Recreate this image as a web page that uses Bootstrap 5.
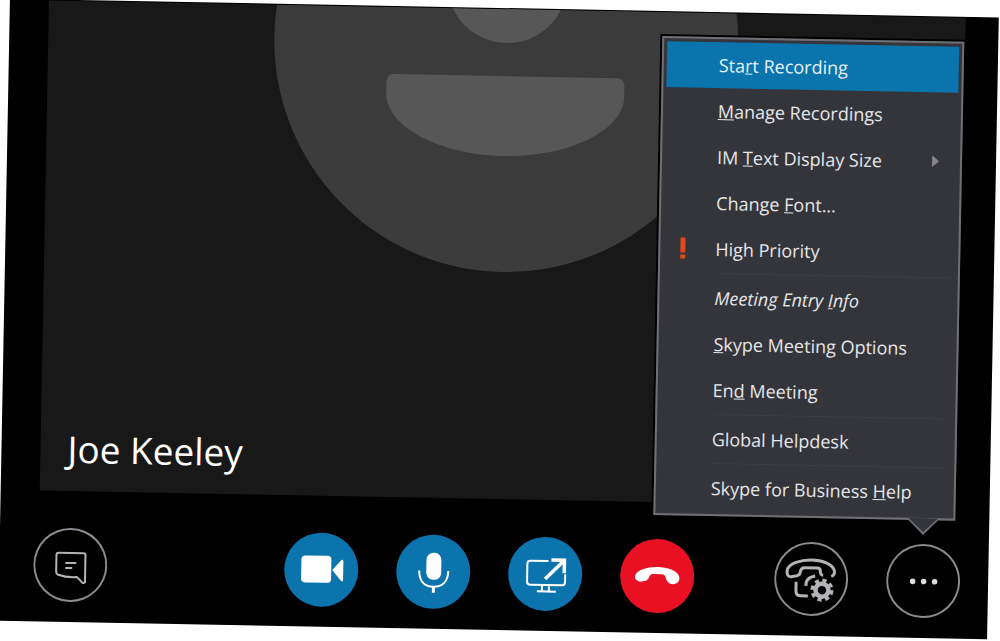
<!DOCTYPE html>
<html lang="en">
<head>
<meta charset="utf-8">
<meta name="viewport" content="width=device-width, initial-scale=1">
<title>Skype Meeting</title>
<link href="https://cdn.jsdelivr.net/npm/bootstrap@5.3.0/dist/css/bootstrap.min.css" rel="stylesheet">
<style>
  body { background: #fff; padding: 8px 7px 11px 4px; font-family: "Open Sans", "Noto Sans", sans-serif; }
  .meeting { min-height: calc(100vh - 19px); background: #000; transform: rotate(1.08deg); }
  .stage { margin: 1px 33px 0 39px; background: #181818; }
  .stage-art { height: 490px; }
  .caller { left: 27px; bottom: 18px; font-size: 37px; line-height: 48px; color: #fff; }
  .controls { padding: 37px 28px 20px 34px; }
  .call-group { margin-right: 80px; }
  .button-row { gap: 38px; }
  .round { width: 74px; height: 74px; border: 0; padding: 0; border-radius: 50%; flex: none; background: #0b74ad; color: #fff; }
  .round svg { display: block; }
  .round-line { background: #000; color: #b4b4b8; box-shadow: inset 0 0 0 2px #8b8a90; }
  .round-end { background: #e81123; }
  .more-menu { right: 34px; bottom: 118px; width: 302px; padding: 3px; background: #34353b; border: 2px solid #6f6e74; box-shadow: 0 0 0 2px #000; z-index: 5; }
  .menu-row { display: flex; align-items: center; width: 100%; height: 46px; padding: 0 18px 0 0; border: 0; background: none; color: #e6e6e8; font-size: 18px; line-height: 24px; text-align: left; }
  .menu-row.active { background: #0b74ad; color: #e4f1f8; }
  .menu-row .mark-col { width: 52px; flex: none; padding-left: 16px; color: #e2491f; }
  .menu-row .mark-col svg { display: block; }
  .menu-line { height: 1px; margin: 1px 4px 1px 54px; border: 0; background: #3c3d43; opacity: 1; }
  .menu-tip { right: 12px; top: 100%; }
</style>
</head>
<body class="min-vh-100 overflow-hidden">
<main class="meeting position-relative d-flex flex-column">
  <section class="stage position-relative flex-grow-1 overflow-hidden">
    <svg class="stage-art d-block w-100" viewBox="43 9 917 490" preserveAspectRatio="xMidYMin meet" aria-hidden="true">
      <circle cx="501" cy="40" r="232" fill="#3b3b3b"/>
      <circle cx="501" cy="-17" r="60" fill="#575757"/>
      <path d="M390 76H612Q620 76 620 84V95C620 128 566 156 501 156S382 128 382 95V84Q382 76 390 76Z" fill="#575757"/>
    </svg>
    <div class="caller position-absolute">Joe Keeley</div>
  </section>

  <footer class="controls d-flex align-items-center">
    <button type="button" class="round round-line" aria-label="Conversation">
      <svg width="74" height="74" fill="none" stroke="currentColor" stroke-width="2" stroke-linejoin="round"><path d="M25 25H50Q52 25 52 27V54Q50 56 48 53L44 49Q34 50 25 47Q23 46 23 44V27Q23 25 25 25ZM32 35H43M32 40H39"/></svg>
    </button>
    <div class="call-group button-row d-flex ms-auto">
      <button type="button" class="round" aria-label="Video">
        <svg width="74" height="74" fill="currentColor"><rect x="17" y="23" width="30" height="27" rx="4"/><path d="M48 37L57 27Q59 26 59 28V47Q59 49 57 48Z"/></svg>
      </button>
      <button type="button" class="round" aria-label="Microphone">
        <svg width="74" height="74" fill="none" stroke="currentColor" stroke-width="2"><rect x="30" y="18" width="15" height="27" rx="7" fill="currentColor" stroke="none"/><path d="M23 36C23 47 29 52 37.500 52S52 47 52 36"/><path d="M37.500 52V58" stroke-width="3"/></svg>
      </button>
      <button type="button" class="round" aria-label="Present">
        <svg width="74" height="74" fill="none" stroke="currentColor" stroke-width="2"><path d="M40 24H22Q19 24 19 27V45Q19 48 22 48H54Q57 48 57 45V37M34 48V54M41 48V54M29 54.500H48"/><path d="M37 42L55 24M43 23H56V36" stroke-width="3.500"/></svg>
      </button>
      <button type="button" class="round round-end" aria-label="Hang up">
        <svg width="74" height="74" fill="currentColor"><path d="M15 37C17 31 27 28 37 28S57 31 59 37Q60 42 56 44Q51 46 48 43Q46 41 45 37Q44 35 42 35H32Q30 35 29 38Q28 41 26 42L20 43Q14 42 15 37Z"/></svg>
      </button>
    </div>
    <div class="button-row d-flex">
      <button type="button" class="round round-line" aria-label="Call controls">
        <svg width="74" height="74" fill="none" stroke="currentColor" stroke-width="3" stroke-linejoin="round">
          <path d="M57 34Q61 33 60 28C58 22 48 18 37 18S15 22 13 28C12 34 15 36 18 35L23 34Q26 33 26 30Q27 26 30 26H43Q46 26 46 29Q46 33 49 33"/>
          <path d="M22 40V49Q22 54 27 54H34M41 34Q31 36 32 44"/>
          <circle cx="48" cy="48" r="6.500" stroke-width="4.500"/>
          <circle cx="48" cy="48" r="9.800" stroke-width="3.500" stroke-dasharray="4.200 3.497"/>
        </svg>
      </button>
      <button type="button" class="round round-line" aria-label="More options" aria-expanded="true">
        <svg width="74" height="74" fill="#dcdce0"><circle cx="26.500" cy="37.500" r="2.800"/><circle cx="37.500" cy="37.500" r="2.800"/><circle cx="48.500" cy="37.500" r="2.800"/></svg>
      </button>
    </div>
  </footer>

  <div class="more-menu position-absolute" role="menu">
    <button type="button" role="menuitem" class="menu-row active"><span class="mark-col"></span><span>Sta<u>r</u>t Recording</span></button>
    <button type="button" role="menuitem" class="menu-row"><span class="mark-col"></span><span><u>M</u>anage Recordings</span></button>
    <button type="button" role="menuitem" class="menu-row"><span class="mark-col"></span><span>IM <u>T</u>ext Display Size</span>
      <svg class="ms-auto" width="7" height="12" fill="#85858a"><path d="M0 0L7 6L0 12Z"/></svg></button>
    <button type="button" role="menuitem" class="menu-row"><span class="mark-col"></span><span>Change <u>F</u>ont...</span></button>
    <button type="button" role="menuitem" class="menu-row"><span class="mark-col"><svg width="8" height="24" fill="currentColor"><path d="M1 1H6V16H1ZM1 18H6V22H1Z"/></svg></span><span>High Priority</span></button>
    <hr class="menu-line">
    <button type="button" role="menuitem" class="menu-row fst-italic"><span class="mark-col"></span><span>Meeting Entry <u>I</u>nfo</span></button>
    <button type="button" role="menuitem" class="menu-row"><span class="mark-col"></span><span><u>S</u>kype Meeting Options</span></button>
    <button type="button" role="menuitem" class="menu-row"><span class="mark-col"></span><span>En<u>d</u> Meeting</span></button>
    <hr class="menu-line">
    <button type="button" role="menuitem" class="menu-row"><span class="mark-col"></span><span>Global Helpdesk</span></button>
    <hr class="menu-line">
    <button type="button" role="menuitem" class="menu-row"><span class="mark-col"></span><span>Skype for Business <u>H</u>elp</span></button>
    <svg class="menu-tip position-absolute" width="36" height="18"><path d="M1 0H35L18 17Z" fill="#6f6e74"/><path d="M3 0H33L18 14Z" fill="#34353b"/></svg>
  </div>
</main>
<script src="https://cdn.jsdelivr.net/npm/bootstrap@5.3.0/dist/js/bootstrap.bundle.min.js"></script>
</body>
</html>
